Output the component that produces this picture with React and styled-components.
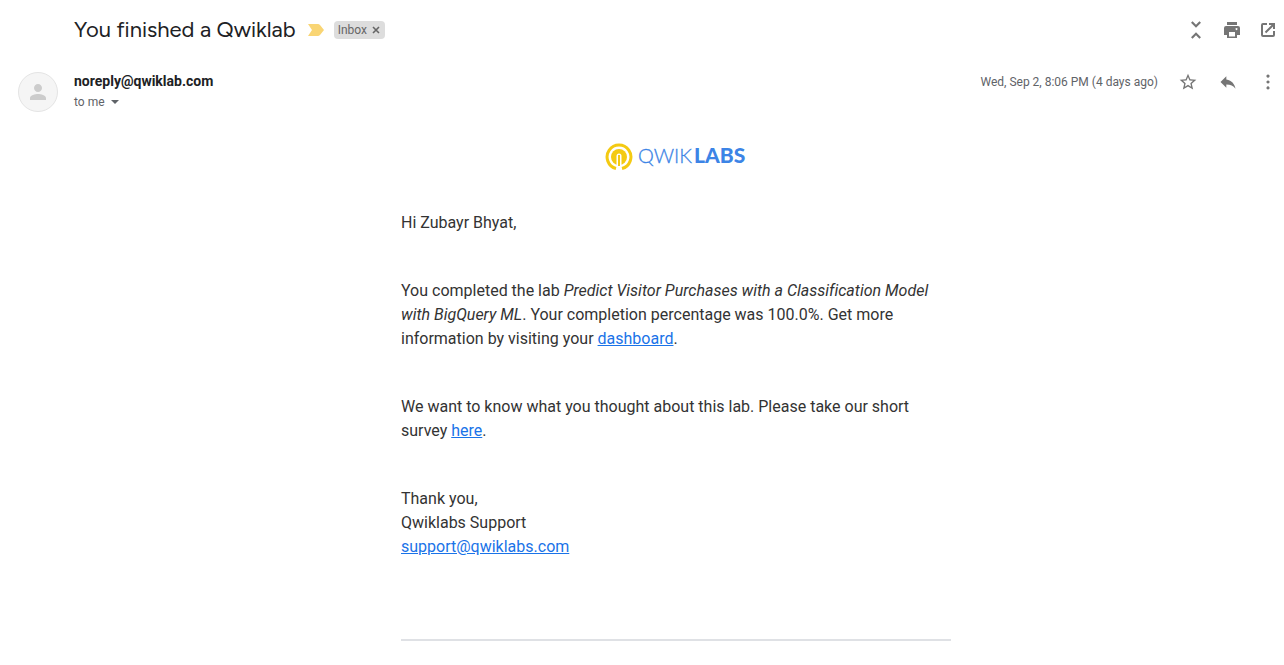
import React from "react";
import styled, { createGlobalStyle } from "styled-components";

const Global = createGlobalStyle`
  * { box-sizing: border-box; }
  body { margin: 0; background: #fff; color: #222; font-family: Roboto, "Liberation Sans", sans-serif; }
`;

const Page = styled.main`
  padding: 16px 6px 24px 18px;
`;

const SubjectBar = styled.header`
  display: flex;
  align-items: center;
  height: 28px;
  padding-left: 56px;
`;

const Subject = styled.h1`
  margin: 0 12px 0 0;
  font: 400 22px/28px Figtree, "Google Sans", Lato, sans-serif;
  color: #202124;
`;

const IconButton = styled.button`
  display: flex;
  align-items: center;
  justify-content: center;
  flex: none;
  width: ${(p) => p.$width || 20}px;
  height: 20px;
  padding: 0;
  border: 0;
  background: none;
  color: ${(p) => p.$color || "#757575"};
  cursor: pointer;
  svg { display: block; flex: none; fill: currentColor; }
`;

const Label = styled.span`
  display: flex;
  align-items: center;
  height: 18px;
  margin-left: 10px;
  padding-left: 4px;
  border-radius: 4px;
  background: #ddd;
  color: #666;
  font-size: 12px;
  line-height: 18px;
`;

const Actions = styled.div`
  display: flex;
  align-items: center;
  gap: ${(p) => p.$gap}px;
  margin-left: auto;
`;

const Sender = styled.section`
  display: flex;
  align-items: flex-start;
  gap: 16px;
  margin-top: 28px;
`;

const Avatar = styled.div`
  display: flex;
  align-items: center;
  justify-content: center;
  flex: none;
  width: 40px;
  height: 40px;
  border: 1px solid #e4e4e4;
  border-radius: 50%;
  background: #f5f5f5;
  color: #ccc;
  svg { fill: currentColor; }
`;

const Address = styled.h2`
  margin: 0;
  font-size: 14px;
  line-height: 18px;
  font-weight: 700;
  color: #202124;
`;

const Recipient = styled.div`
  display: flex;
  align-items: center;
  font-size: 12px;
  line-height: 24px;
  color: #5f6368;
`;

const Sent = styled.time`
  font-size: 12px;
  line-height: 20px;
  color: #5f6368;
`;

const Message = styled.article`
  max-width: 550px;
  margin: 29px auto 0;
  font-size: 16px;
  line-height: 24px;
  font-variant-ligatures: none;
  color: #333;
`;

const Body = styled.div`
  padding-left: 56px;
`;

const Brand = styled.div`
  display: flex;
  justify-content: center;
  svg { display: block; }
`;

const Paragraph = styled.p`
  margin: 0 0 44px;
`;

const Copy = styled.div`
  padding: 40px 0 36px;
  border-bottom: 2px solid #dfe1e5;
`;

const Link = styled.a`
  color: #1a73e8;
  text-decoration: underline;
`;

const Icon = ({ d, size = 20, box = 24 }) => (
  <svg width={size} height={size} viewBox={`0 0 ${box} ${box}`} aria-hidden="true">
    <path d={d} fillRule="evenodd" />
  </svg>
);

const icons = {
  collapse: "M7.41 18.59L8.83 20 12 16.83 15.17 20l1.41-1.41L12 14l-4.59 4.59zm9.18-13.18L15.17 4 12 7.17 8.83 4 7.41 5.41 12 10l4.59-4.59z",
  print: "M3 0h10v3H3zM2 4h12a2 2 0 0 1 2 2v7h-3v3H3v-3H0V6a2 2 0 0 1 2-2zM5 10v4.500h6V10zM12.500 6a1 1 0 1 0 .01 0z",
  open: "M2 0h4v2H2v10h10V8h2v4a2 2 0 0 1-2 2H2a2 2 0 0 1-2-2V2a2 2 0 0 1 2-2zM8 0h6v6h-2V3.400L5.200 10.200 3.800 8.800 10.600 2H8z",
  star: "M22 9.24l-7.19-.62L12 2 9.19 8.63 2 9.24l5.46 4.73L5.82 21 12 17.27 18.18 21l-1.63-7.03L22 9.24zM12 15.4l-3.76 2.27 1-4.28-3.32-2.88 4.38-.38L12 6.1l1.71 4.04 4.38.38-3.32 2.88 1 4.28L12 15.4z",
  reply: "M10 9V5l-7 7 7 7v-4.1c5 0 8.5 1.6 11 5.1-1-5-4-10-11-11z",
  more: "M12 3a1.9 1.9 0 1 0 .01 0zM12 10.1a1.9 1.9 0 1 0 .01 0zM12 17.2a1.9 1.9 0 1 0 .01 0z",
  person: "M12 12c2.21 0 4-1.79 4-4s-1.79-4-4-4-4 1.79-4 4 1.79 4 4 4zm0 2c-2.67 0-8 1.34-8 4v2h16v-2c0-2.66-5.33-4-8-4z",
};

const Logo = () => (
  <svg width="142" height="28" viewBox="0 0 142 28" role="img" aria-label="Qwiklabs">
    <path d="M11 25.5A11.900 11.900 0 1 1 17 25.500" fill="none" stroke="#f4ca12" strokeWidth="3" />
    <circle cx="14" cy="14" r="8" fill="#f4ca12" />
    <path d="M11.500 23V13a2.500 2.500 0 0 1 5 0V23z" fill="#fff" />
    <path d="M13 12h2v11h-2z" fill="#f4ca12" />
    <g fill="#3c84e6" fontFamily="Lato, sans-serif">
      <text x="33" y="20" fontSize="20" fontWeight="300" stroke="#3c84e6" strokeWidth="0.3">QWIK</text>
      <text x="89" y="20" fontSize="21" fontWeight="900">LABS</text>
    </g>
  </svg>
);

export default function App() {
  return (
    <Page>
      <Global />
      <SubjectBar>
        <Subject>You finished a Qwiklab</Subject>
        <IconButton $width={16} $color="#f9d574" aria-label="Important">
          <svg width="16" height="12" viewBox="0 0 16 12"><path d="M0 0h10q1 0 2 1l4 5-4 5q-1 1-2 1H0l4-6z" /></svg>
        </IconButton>
        <Label>
          Inbox
          <IconButton $width={18} $color="#666" aria-label="Remove label Inbox">
            <svg width="8" height="8" viewBox="0 0 8 8"><path d="M1 1l6 6M7 1L1 7" stroke="currentColor" strokeWidth="1.6" /></svg>
          </IconButton>
        </Label>
        <Actions $gap={16}>
          <IconButton aria-label="Collapse all"><Icon d={icons.collapse} size={26} /></IconButton>
          <IconButton aria-label="Print all"><Icon d={icons.print} size={16} box={16} /></IconButton>
          <IconButton aria-label="In new window"><Icon d={icons.open} size={14} box={14} /></IconButton>
        </Actions>
      </SubjectBar>
      <Sender>
        <Avatar><Icon d={icons.person} size={24} /></Avatar>
        <div>
          <Address>noreply@qwiklab.com</Address>
          <Recipient>
            to me
            <IconButton $color="#5f6368" aria-label="Show details">
              <svg width="8" height="4" viewBox="0 0 8 4"><path d="M0 0h8L4 4z" /></svg>
            </IconButton>
          </Recipient>
        </div>
        <Actions $gap={20}>
          <Sent>Wed, Sep 2, 8:06 PM (4 days ago)</Sent>
          <IconButton aria-label="Star"><Icon d={icons.star} /></IconButton>
          <IconButton aria-label="Reply"><Icon d={icons.reply} /></IconButton>
          <IconButton aria-label="More"><Icon d={icons.more} /></IconButton>
        </Actions>
      </Sender>
      <Body>
        <Message>
          <Brand><Logo /></Brand>
          <Copy>
            <Paragraph>Hi Zubayr Bhyat,</Paragraph>
            <Paragraph>
              You completed the lab <em>Predict Visitor Purchases with a Classification Model with BigQuery ML</em>.
              Your completion percentage was 100.0%. Get more information by visiting your <Link href="#dashboard">dashboard</Link>.
            </Paragraph>
            <Paragraph>
              We want to know what you thought about this lab. Please take our short survey <Link href="#survey">here</Link>.
            </Paragraph>
            <Paragraph>
              Thank you,<br />Qwiklabs Support<br />
              <Link href="mailto:support@qwiklabs.com">support@qwiklabs.com</Link>
            </Paragraph>
          </Copy>
        </Message>
      </Body>
    </Page>
  );
}
